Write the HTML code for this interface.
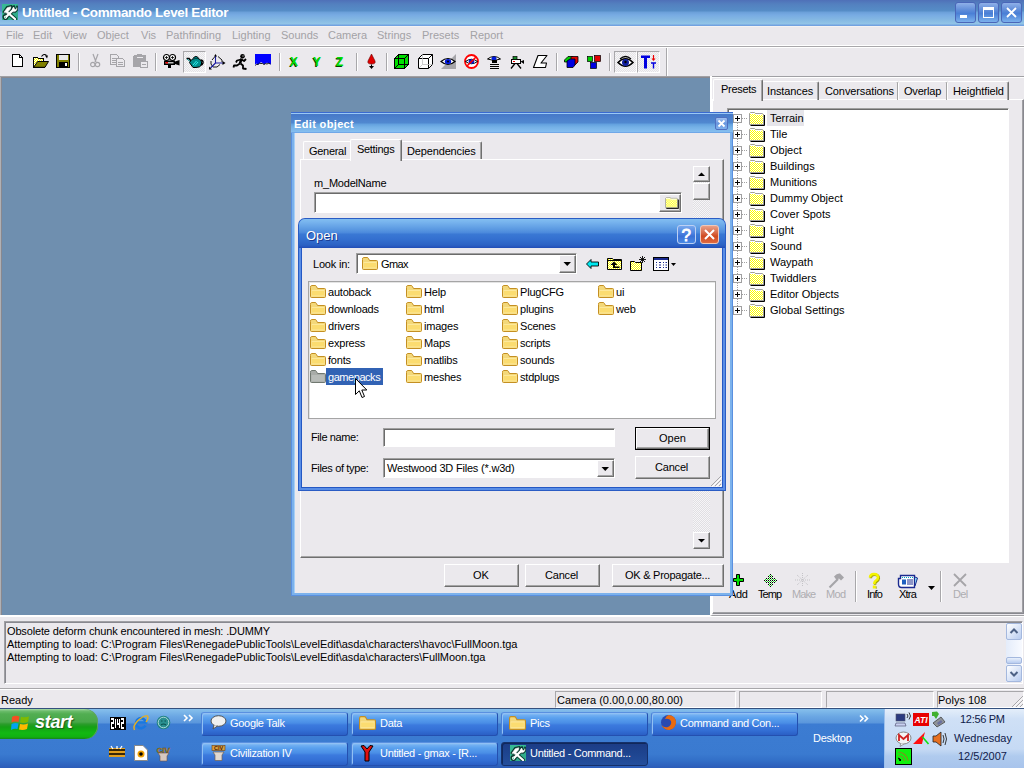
<!DOCTYPE html>
<html><head><meta charset="utf-8">
<style>
*{margin:0;padding:0;box-sizing:border-box}
html,body{width:1024px;height:768px;overflow:hidden;background:#ebe9ed;font-family:"Liberation Sans",sans-serif;font-size:11px;color:#000}
body{position:relative}
.a{position:absolute}
.t{position:absolute;white-space:nowrap;line-height:11px;font-size:11px}
svg{position:absolute;overflow:visible}
#title{left:0;top:0;width:1024px;height:26px;background:linear-gradient(to bottom,#4f70b8 0px,#5380bf 4px,#568dc7 11px,#6a9fd9 12px,#78abe3 15px,#85b9e3 20px,#93c5e7 24px,#72a2e0 25px,#72a2e0 26px)}
.tbtn{position:absolute;top:2px;width:21px;height:21px;border:1px solid #4a66b8;border-radius:3px;background:linear-gradient(to bottom,#8fb0e8 0,#5c8ad8 40%,#4a7fd6 55%,#7ab0ec 100%)}
#menu{left:0;top:26px;width:1024px;height:20px;background:#ebe9ed;border-top:1px solid #f4f2f2;border-bottom:1px solid #fff}
.mi{color:#a3a2a6;top:30px}
#tb{left:0;top:46px;width:1024px;height:31px;background:#ebe9ed;border-top:1px solid #a8a7aa;border-bottom:1px solid #a0a0a4;box-shadow:inset 0 1px 0 #fff}
#view{left:0;top:77px;width:710px;height:538px;background:#6f8faf;border-left:1px solid #b0b0b4;box-shadow:inset 1px 1px 0 #88888f}
.sep{position:absolute;top:53px;width:2px;height:18px;border-left:1px solid #a8a7aa;border-right:1px solid #fff}
.raised{border:1px solid;border-color:#fff #6f6f6f #6f6f6f #fff;box-shadow:inset -1px -1px 0 #a5a5a5;background:#ebe9ed}
.sunk{border:1px solid;border-color:#a0a0a0 #fff #fff #a0a0a0;box-shadow:inset 1px 1px 0 #6b6b6b;background:#fff}
.sunk1{border:1px solid #a5a5a5;background:#fff}
.xbtn{position:absolute;border-radius:3px}
.tbb{width:147px;height:24px;border-radius:3px;border:1px solid #2450b0;border-top-color:#5a90e0;border-left-color:#4a80d8;background:linear-gradient(to bottom,#9ccaf6 0,#72b0f2 2px,#5aa0ee 5px,#4a8ee6 10px,#3c7ade 12px,#3470d6 17px,#2c62c8 21px,#2858c0 24px);box-shadow:inset 1px 1px 0 #90c0f4}
.tbp{width:147px;height:24px;border-radius:3px;border:1px solid #15306a;background:linear-gradient(to bottom,#1c3c86 0,#1e4590 50%,#244e9c 100%);box-shadow:inset 1px 1px 0 #10285a}
.tbt{color:#fff;top:718px;letter-spacing:-0.3px}
</style></head><body>
<svg width="0" height="0" style="position:absolute">
<defs>
<symbol id="fold" viewBox="0 0 16 13">
<path d="M0.5 2.5 L0.5 11.5 Q0.5 12.5 1.5 12.5 L14.5 12.5 Q15.5 12.5 15.5 11.5 L15.5 4.5 Q15.5 3.5 14.5 3.5 L7.5 3.5 L6.5 1.5 Q6 0.5 5 0.5 L1.5 0.5 Q0.5 0.5 0.5 2.5 Z" fill="#f3d87a" stroke="#c48f22"/>
<path d="M1.5 5 L14.5 5 L14.5 11.5 L1.5 11.5 Z" fill="#fde89a"/>
<path d="M2 6 L14 6 L14 10.5 L2 10.5Z" fill="#fbdc70"/>
</symbol>
<symbol id="cfold" viewBox="0 0 16 14">
<path d="M0.5 1.5 L5.5 1.5 L7 3.5 L14.5 3.5 L14.5 12.5 L0.5 12.5 Z" fill="#ffff80" stroke="#000"/>
<path d="M1 4.5 L14 4.5" stroke="#000"/>
<path d="M1 13.5 L15.5 13.5 L15.5 4.5" stroke="#000" fill="none"/>
</symbol>
<pattern id="dith" width="2" height="2" patternUnits="userSpaceOnUse"><rect width="2" height="2" fill="#ffff00"/><rect width="1" height="1" fill="#fff"/><rect x="1" y="1" width="1" height="1" fill="#fff"/></pattern>
<symbol id="tfold" viewBox="0 0 16 14">
<path d="M1 13 H15 V3 L14 2 H7 L6 1 H2 L1 2 Z" fill="#000"/>
<path d="M0.5 12.5 V1.5 L1.5 0.5 H5.5 L6.5 1.5 H13.5 L14.5 2.5 V12.5 Z" fill="url(#dith)" stroke="#a0a0a0"/>
<path d="M1 1.5 H5.5 L6.5 2.5 H13.5" stroke="#fff" fill="none"/>
<path d="M1.5 13.5 H15.5 V3" stroke="#000" fill="none"/>
</symbol>
<symbol id="gfold" viewBox="0 0 16 13">
<path d="M0.5 2.5 L0.5 11.5 Q0.5 12.5 1.5 12.5 L14.5 12.5 Q15.5 12.5 15.5 11.5 L15.5 4.5 Q15.5 3.5 14.5 3.5 L7.5 3.5 L6.5 1.5 Q6 0.5 5 0.5 L1.5 0.5 Q0.5 0.5 0.5 2.5 Z" fill="#a8aca8" stroke="#707870"/>
<path d="M1.5 5 L14.5 5 L14.5 11.5 L1.5 11.5 Z" fill="#b8bcb8"/>
</symbol>
<symbol id="tools" viewBox="0 0 16 16">
<rect width="16" height="16" fill="#36b994"/>
<path d="M0 16 L16 0 V16Z" fill="#2aa080" opacity="0.5"/>
<g stroke="#0b3b30" stroke-linecap="round" stroke-linejoin="round" fill="#0b3b30">
<path d="M5.5 8.5 L13 15" stroke-width="4"/>
<path d="M3.5 13.5 L11.5 5.5" stroke-width="4"/>
<path d="M1.5 8 L5 3 L9.5 2 L9 5 L5 9.5Z" stroke-width="2"/>
<path d="M10 7.5 Q9 3 12 2 L13 4.5 L15 5 L15 2.5 Q16.5 6 13 8Z" stroke-width="1.8"/>
<circle cx="3.5" cy="13" r="2.3" stroke-width="1.5"/>
</g>
<g stroke="#fff" stroke-linecap="round" stroke-linejoin="round" fill="#fff">
<path d="M5.5 8.5 L13 15" stroke-width="2.3"/>
<path d="M3.5 13.5 L11.5 5.5" stroke-width="2.3"/>
<path d="M2.2 8 L5.3 3.7 L8.8 2.8 L8.4 5 L5 8.8Z" stroke-width="0.6"/>
<path d="M10.5 7.3 Q10 3.8 11.7 3 L12.5 5.2 L14.7 5.8 L14.8 3.7 Q15.5 6.3 12.8 7.6Z" stroke-width="0.5"/>
<circle cx="3.5" cy="13" r="1.6" stroke-width="0"/>
</g>
<circle cx="3.2" cy="13.3" r="0.7" fill="#36b994"/>
</symbol>
<pattern id="chk" width="2" height="2" patternUnits="userSpaceOnUse"><rect width="1" height="1" fill="#000"/><rect x="1" y="1" width="1" height="1" fill="#20e020"/></pattern>
</defs>
</svg>
<!-- TITLE -->
<div id="title" class="a"></div>
<svg style="left:2px;top:4px" width="16" height="16"><use href="#tools"/></svg>
<div class="t" style="left:22px;top:6px;font-size:13.4px;line-height:13.4px;font-weight:bold;color:#fff;letter-spacing:-0.3px">Untitled - Commando Level Editor</div>
<div class="tbtn" style="left:955px"></div>
<div class="a" style="left:960px;top:15px;width:7px;height:3px;background:#fff"></div>
<div class="tbtn" style="left:978px"></div>
<div class="a" style="left:983px;top:7px;width:11px;height:11px;border:1px solid #fff;border-top-width:3px"></div>
<div class="tbtn" style="left:1001px"></div>
<svg style="left:1001px;top:2px" width="21" height="21" viewBox="0 0 21 21"><path d="M6 6 L15 15 M15 6 L6 15" stroke="#fff" stroke-width="1.8"/></svg>
<!-- MENU -->
<div id="menu" class="a"></div>
<div class="t mi" style="left:6px">File</div>
<div class="t mi" style="left:33px">Edit</div>
<div class="t mi" style="left:63px">View</div>
<div class="t mi" style="left:97px">Object</div>
<div class="t mi" style="left:141px">Vis</div>
<div class="t mi" style="left:166px">Pathfinding</div>
<div class="t mi" style="left:232px">Lighting</div>
<div class="t mi" style="left:281px">Sounds</div>
<div class="t mi" style="left:328px">Camera</div>
<div class="t mi" style="left:377px">Strings</div>
<div class="t mi" style="left:422px">Presets</div>
<div class="t mi" style="left:470px">Report</div>
<!-- TOOLBAR -->
<div id="tb" class="a"></div>
<!-- VIEWPORT / LOG / STATUS -->
<div id="view" class="a"></div>
<div class="a" style="left:0;top:615px;width:1024px;height:2px;background:#fff"></div>
<div class="a" style="left:4px;top:621px;width:1019px;height:63px;border:1px solid;border-color:#a0a0a4 #fff #fff #a0a0a4;box-shadow:inset 1px 1px 0 #88888f;background:#ebe9ed"></div>
<div class="t" style="left:7px;top:626px;letter-spacing:-0.15px">Obsolete deform chunk encountered in mesh: .DUMMY</div>
<div class="t" style="left:7px;top:639px;letter-spacing:-0.05px">Attempting to load: C:\Program Files\RenegadePublicTools\LevelEdit\asda\characters\havoc\FullMoon.tga</div>
<div class="t" style="left:7px;top:652px;letter-spacing:-0.05px">Attempting to load: C:\Program Files\RenegadePublicTools\LevelEdit\asda\characters\FullMoon.tga</div>
<!-- log scrollbar -->
<div class="a" style="left:1006px;top:623px;width:16px;height:59px;background:linear-gradient(to right,#e4ecfa,#f8faff)"></div>
<div class="a" style="left:1006px;top:623px;width:16px;height:17px;border:1px solid #a4b8de;border-radius:2px;background:linear-gradient(135deg,#ffffff 0,#dce6f8 50%,#b8ccf0 100%)"></div>
<svg style="left:1006px;top:623px" width="16" height="17"><path d="M4.5 10 L8 6.5 L11.5 10" stroke="#4d6185" stroke-width="2" fill="none"/></svg>
<div class="a" style="left:1006px;top:657px;width:16px;height:7px;border:1px solid #a4b8de;border-radius:2px;background:linear-gradient(to bottom,#e8f0fc,#b8ccf0)"></div>
<div class="a" style="left:1006px;top:665px;width:16px;height:17px;border:1px solid #a4b8de;border-radius:2px;background:linear-gradient(135deg,#ffffff 0,#dce6f8 50%,#b8ccf0 100%)"></div>
<svg style="left:1006px;top:665px" width="16" height="17"><path d="M4.5 7 L8 10.5 L11.5 7" stroke="#4d6185" stroke-width="2" fill="none"/></svg>
<div class="a" style="left:0;top:688px;width:1024px;height:1px;background:#a8a7aa"></div>
<div class="a" style="left:0;top:689px;width:1024px;height:1px;background:#fff"></div>
<div class="t" style="left:1px;top:695px">Ready</div>
<div class="a" style="left:555px;top:691px;width:181px;height:17px;border:1px solid;border-color:#a8a7aa #fff #fff #a8a7aa"></div>
<div class="t" style="left:557px;top:695px">Camera (0.00,0.00,80.00)</div>
<div class="a" style="left:739px;top:691px;width:83px;height:17px;border:1px solid;border-color:#a8a7aa #fff #fff #a8a7aa"></div>
<div class="a" style="left:826px;top:691px;width:108px;height:17px;border:1px solid;border-color:#a8a7aa #fff #fff #a8a7aa"></div>
<div class="a" style="left:937px;top:691px;width:87px;height:17px;border:1px solid;border-color:#a8a7aa #fff #fff #a8a7aa"></div>
<div class="t" style="left:938px;top:695px">Polys 108</div>
<svg style="left:1010px;top:694px" width="14" height="14"><path d="M13 2 L2 13 M13 6 L6 13 M13 10 L10 13" stroke="#a8a7aa" stroke-width="1"/><path d="M13.5 3 L3 13.5 M13.5 7 L7 13.5 M13.5 11 L11 13.5" stroke="#fff" stroke-width="1"/></svg>
<!-- toolbar icons -->
<svg style="left:12px;top:54px" width="12" height="14" viewBox="0 0 12 14" shape-rendering="crispEdges">
<path d="M0.5 0.5 H7.5 L10.5 3.5 V12.5 H0.5 Z" fill="#fff" stroke="#000"/><path d="M7.5 0.5 V3.5 H10.5" fill="none" stroke="#000"/></svg>
<svg style="left:33px;top:53px" width="16" height="15" viewBox="0 0 16 15">
<path d="M8.5 3.5 Q11 0 13.5 2.5" stroke="#000" stroke-width="1.1" fill="none"/><path d="M12 2.5 L15 2.5 L14 5.5Z" fill="#000"/>
<path d="M0.5 4.5 H4.5 L5.5 5.5 H10.5 V8.5 H0.5Z" fill="url(#dith)" stroke="#000" stroke-width="1" shape-rendering="crispEdges"/>
<path d="M0.5 5 V14.5 H12" fill="url(#dith)" stroke="#000" stroke-width="1" shape-rendering="crispEdges"/>
<rect x="1" y="8" width="4" height="6" fill="url(#dith)"/>
<path d="M0.8 14.3 L4.5 8.5 H15.5 L12 14.3 Z" fill="#808000" stroke="#000" stroke-width="1"/>
</svg>
<svg style="left:56px;top:54px" width="15" height="14" viewBox="0 0 15 14" shape-rendering="crispEdges">
<rect x="0.5" y="0.5" width="13" height="13" fill="#808000" stroke="#000"/><rect x="3" y="1" width="9" height="5" fill="#e8e8e8"/><rect x="3" y="8" width="9" height="5" fill="#000"/><rect x="9" y="9" width="2" height="3" fill="#fff"/></svg>
<div class="sep" style="left:78px"></div>
<svg style="left:90px;top:54px" width="11" height="14" viewBox="0 0 11 14">
<path d="M3 0 L6 8 M8 0 L5 8" stroke="#a6a5a9" stroke-width="1.2" fill="none"/><circle cx="2.8" cy="10.5" r="2.2" fill="none" stroke="#a6a5a9" stroke-width="1.2"/><circle cx="7.5" cy="10.5" r="2.2" fill="none" stroke="#a6a5a9" stroke-width="1.2"/></svg>
<svg style="left:110px;top:54px" width="16" height="14" viewBox="0 0 16 14" shape-rendering="crispEdges">
<path d="M0.5 0.5 H6.5 L8.5 2.5 V10.5 H0.5Z" fill="#ebe9ed" stroke="#a6a5a9"/><path d="M2 4.5H6 M2 6.5H6 M2 8.5H6" stroke="#a6a5a9"/>
<path d="M6.5 4.5 H12.5 L14.5 6.5 V12.5 H6.5Z" fill="#ebe9ed" stroke="#a6a5a9"/><path d="M8 8.5H13 M8 10.5H13" stroke="#a6a5a9"/></svg>
<svg style="left:133px;top:54px" width="16" height="14" viewBox="0 0 16 14" shape-rendering="crispEdges">
<rect x="0" y="1" width="13" height="12" rx="2" fill="#a6a5a9"/><rect x="4" y="0" width="5" height="2" fill="#a6a5a9"/><rect x="4" y="2.5" width="6" height="1" fill="#ebe9ed"/>
<path d="M7.5 7.5 H14.5 V13.5 H7.5Z" fill="#ebe9ed" stroke="#a6a5a9"/><path d="M9 10.5H13" stroke="#a6a5a9"/></svg>
<div class="sep" style="left:155px"></div>
<svg style="left:163px;top:54px" width="17" height="14" viewBox="0 0 17 14">
<circle cx="3.5" cy="3.5" r="3" fill="#fff" stroke="#000" stroke-width="1.2"/><circle cx="9.5" cy="3.5" r="3" fill="#fff" stroke="#000" stroke-width="1.2"/><path d="M2 3.5H5 M3.5 2V5 M8 3.5H11 M9.5 2V5" stroke="#000" stroke-width="0.8"/>
<rect x="1" y="6.5" width="11" height="4.5" fill="#000"/><rect x="2.5" y="8" width="8" height="1.5" fill="#c0c0c0"/><rect x="2.5" y="8" width="2.5" height="1.5" fill="#e00"/><path d="M12 7.5 L16.5 6 V11.5 L12 10Z" fill="#000"/><rect x="5" y="11" width="3" height="3" fill="#000"/></svg>
<div class="a" style="left:183px;top:51px;width:23px;height:22px;border:1px solid;border-color:#a8a7aa #fff #fff #a8a7aa;background:repeating-conic-gradient(#f6f5f7 0 25%,#e4e3e6 0 50%) 0 0/2px 2px"></div>
<svg style="left:186px;top:56px" width="18" height="12" viewBox="0 0 18 12">
<path d="M0.5 2.5 L3 2.5 L6 6" stroke="#000" stroke-width="1.6" fill="none"/>
<path d="M1 3 L6 7" stroke="#008c8c" stroke-width="1" fill="none"/>
<path d="M5 4.5 Q6 2.5 9 2.5 L12 2.5 Q15 3 15.5 6 L15.5 9 Q14 11.5 10 11.5 L7 11.5 Q5 9 3.5 6.5Z" fill="#008c8c" stroke="#000" stroke-width="1"/>
<path d="M7 2.5 Q8 0.5 10 0.5 Q12 0.5 12.5 2.5" fill="#008c8c" stroke="#000" stroke-width="1"/>
<path d="M15 4 Q17.5 4.5 17 7 Q16.5 9 14.5 9" fill="none" stroke="#000" stroke-width="1.4"/>
<path d="M7 9 L10.5 5 M9 9.5 L12 6" stroke="#30f0f0" stroke-width="1"/>
</svg>
<svg style="left:209px;top:54px" width="17" height="16" viewBox="0 0 17 16">
<path d="M3 6 L6 2.5 M9 2.5 L13 6 L13 8 M11 10.5 L8 13 L4 13 L2 10 L2 7" stroke="#000" stroke-width="0.9" fill="none"/>
<path d="M6.5 9 V2 M6.5 9 H14 M6.5 9 L1.5 14" stroke="#1a1aa0" stroke-width="1.1" fill="none"/>
<path d="M5 2.5 L6.5 0 L8 2.5Z M13.5 7 L16.5 9 L13.5 11Z M0 12.5 L0 15.5 L3 15.5Z" fill="#000"/>
</svg>
<svg style="left:233px;top:54px" width="14" height="16" viewBox="0 0 14 16">
<circle cx="9.5" cy="2.3" r="2.3" fill="#000"/><rect x="9.5" y="1.5" width="1" height="1" fill="#fff"/>
<path d="M8.5 4.5 L7 9.5" stroke="#000" stroke-width="2.6" fill="none"/>
<path d="M8.5 5.5 L11 7 L13 5" stroke="#000" stroke-width="1.8" fill="none" stroke-linejoin="round"/>
<path d="M8 5.5 L4 6.5 L3 8.5" stroke="#000" stroke-width="1.8" fill="none" stroke-linejoin="round"/>
<path d="M7 9.5 L4 11.5 L1 11.5 L0.5 13.5" stroke="#000" stroke-width="1.8" fill="none" stroke-linejoin="round"/>
<path d="M7.5 9.5 L10 11.5 L10 14.5 L13.5 15" stroke="#000" stroke-width="1.8" fill="none" stroke-linejoin="round"/>
</svg>
<svg style="left:255px;top:54px" width="17" height="13" viewBox="0 0 17 13">
<path d="M0 0 H16 V11 Q15 8.5 13.5 9.5 Q12 8 10.5 9.5 Q9 11 7.5 9 Q6 7.5 4.5 9.5 Q3 11.5 1.5 9.5 Q0.5 9 0 12Z" fill="#0000ff"/>
<path d="M0.5 11.5 Q1.5 9.5 3 10.5 Q4.5 8.5 6 9.5 Q7.5 9 9 10.5 Q10.5 9 12 10 Q13.5 8.5 15.5 10" stroke="#000" stroke-width="0.9" fill="none"/>
</svg>
<div class="sep" style="left:279px"></div>
<div class="t" style="left:290px;top:56px;font-size:12px;line-height:12px;font-weight:bold;color:#00e000;text-shadow:-1px 1px 0 #004000">X</div>
<div class="t" style="left:313px;top:56px;font-size:12px;line-height:12px;font-weight:bold;color:#00e000;text-shadow:-1px 1px 0 #004000">Y</div>
<div class="t" style="left:336px;top:56px;font-size:12px;line-height:12px;font-weight:bold;color:#00e000;text-shadow:-1px 1px 0 #004000">Z</div>
<div class="sep" style="left:356px"></div>
<svg style="left:367px;top:54px" width="10" height="16" viewBox="0 0 10 16">
<path d="M4.5 0 L1 7 Q0 10 4.5 10 Q9 10 8 7Z" fill="#e00000" stroke="#600" stroke-width="0.6"/><path d="M4.5 10.5 V12" stroke="#000"/><path d="M2 12 H7 L4.5 15Z" fill="#000"/></svg>
<div class="sep" style="left:386px"></div>
<svg style="left:394px;top:54px" width="16" height="15" viewBox="0 0 16 15" shape-rendering="crispEdges">
<path d="M0.5 4.5 L4.5 0.5 H14.5 V10.5 L10.5 14.5 H0.5Z" fill="#00e000" stroke="#000"/>
<path d="M0.5 4.5 H10.5 V14.5 M10.5 4.5 L14.5 0.5 M4.5 0.5 V10.5 H14.5 M4.5 10.5 L0.5 14.5" stroke="#000" fill="none"/>
<rect x="5" y="5" width="5" height="5" fill="#00e000"/>
</svg>
<svg style="left:418px;top:54px" width="16" height="15" viewBox="0 0 16 15">
<path d="M0.5 4.5 L4.5 0.5 H14.5 V10.5 L10.5 14.5 H0.5Z" fill="#fff" stroke="#000"/><path d="M0.5 4.5 H10.5 V14.5 M10.5 4.5 L14.5 0.5" stroke="#000" fill="none"/><path d="M4.5 0.5 V10.5 H14.5 M4.5 10.5 L0.5 14.5" stroke="#c0c0c0" fill="none" stroke-width="0.8"/></svg>
<svg style="left:440px;top:54px" width="16" height="15" viewBox="0 0 16 15">
<path d="M16 0 V15 H1Z" fill="#a6a5a9"/><path d="M1 7.5 Q8 1.5 15 7.5 Q8 13.5 1 7.5Z" fill="#fff" stroke="#000" stroke-width="1.2"/><ellipse cx="8" cy="7.5" rx="3.2" ry="2.6" fill="#0018d8"/><circle cx="8" cy="7.5" r="1" fill="#000"/></svg>
<svg style="left:463px;top:54px" width="17" height="15" viewBox="0 0 17 15">
<circle cx="8.5" cy="7.5" r="6.5" fill="#fff" stroke="#ff0000" stroke-width="1.8"/><path d="M2.5 7.5 Q8.5 3 14.5 7.5 Q8.5 12 2.5 7.5Z" fill="#fff" stroke="#000" stroke-width="1"/><ellipse cx="8.5" cy="7.5" rx="2.8" ry="2.2" fill="#0018d8"/><path d="M4 12 L13 3" stroke="#ff0000" stroke-width="1.6"/></svg>
<svg style="left:487px;top:55px" width="15" height="14" viewBox="0 0 15 14">
<path d="M0.5 4 Q7 -1 13.5 4 Q7 7 0.5 4Z" fill="#fff" stroke="#000"/><ellipse cx="7" cy="3.5" rx="2.5" ry="2" fill="#0018d8"/><rect x="5" y="5" width="5" height="3" fill="#000"/><path d="M3 9.5H12 M3 11.5H12 M3 13.5H12" stroke="#000" stroke-width="1.2"/></svg>
<svg style="left:510px;top:56px" width="15" height="13" viewBox="0 0 15 13">
<rect x="1.5" y="3.5" width="9" height="4" fill="#fff" stroke="#000"/><rect x="3" y="5" width="2" height="1" fill="#e00"/><rect x="3" y="0.5" width="4" height="3" fill="#1a8a2a" stroke="#000" stroke-width="0.7"/><path d="M10.5 5.5 L14 4 V8 Z" fill="#000"/><path d="M5 7.5 L1 12.5 M7 7.5 L11 12.5" stroke="#000" stroke-width="1.3"/></svg>
<svg style="left:533px;top:55px" width="15" height="13" viewBox="0 0 15 13">
<path d="M5 0.5 H14 L8 8 H13.5 L12.5 12.5 H0.5 Z" fill="#fff" stroke="#000" stroke-width="1.1" stroke-linejoin="round"/></svg>
<div class="sep" style="left:556px"></div>
<svg style="left:564px;top:56px" width="15" height="12" viewBox="0 0 15 12">
<path d="M0.5 4 L4 0.5 H9 V6 H0.5Z" fill="#00d000" stroke="#000" stroke-width="0.8"/><path d="M7 0.5 H14 V6 L11 9 H7Z" fill="#e00000" stroke="#000" stroke-width="0.8"/><path d="M3 5 L6 3 H11 V9 L9 11.5 H3Z" fill="#0000e0" stroke="#000" stroke-width="0.8"/></svg>
<svg style="left:587px;top:55px" width="14" height="14" viewBox="0 0 14 14">
<rect x="0.5" y="1.5" width="5" height="5" fill="#00d000" stroke="#000" stroke-width="0.7"/><rect x="7.5" y="0.5" width="6" height="6" fill="#e00000" stroke="#000" stroke-width="0.7"/><rect x="3.5" y="7.5" width="6" height="6" fill="#0000e0" stroke="#000" stroke-width="0.7"/></svg>
<div class="sep" style="left:609px"></div>
<div class="a" style="left:614px;top:51px;width:23px;height:22px;border:1px solid;border-color:#a8a7aa #fff #fff #a8a7aa;background:repeating-conic-gradient(#f6f5f7 0 25%,#e4e3e6 0 50%) 0 0/2px 2px"></div>
<svg style="left:617px;top:55px" width="17" height="15" viewBox="0 0 17 15">
<path d="M1 7.5 Q8.5 0 16 7.5 Q8.5 15 1 7.5Z" fill="#fff" stroke="#000" stroke-width="1.6"/><path d="M3 4 Q8.5 -1 14 4" stroke="#000" fill="none" stroke-width="1.2"/><circle cx="8.5" cy="7.5" r="3.5" fill="#1020a0"/><circle cx="8.5" cy="7" r="1.2" fill="#000"/></svg>
<div class="a" style="left:637px;top:51px;width:23px;height:22px;border:1px solid;border-color:#a8a7aa #fff #fff #a8a7aa;background:repeating-conic-gradient(#f6f5f7 0 25%,#e4e3e6 0 50%) 0 0/2px 2px"></div>
<svg style="left:641px;top:55px" width="16" height="14" viewBox="0 0 16 14">
<path d="M0 0.5 H9 V3 H6 V13.5 H3 V3 H0Z" fill="#0000e0"/><path d="M12.5 0 V5" stroke="#e00" stroke-width="1.2"/><path d="M10.5 3.5 H14.5 L12.5 6Z" fill="#e00"/><path d="M10 8 H15 M12.5 8 V13.5" stroke="#0000e0" stroke-width="1.4"/></svg>
<div class="a" style="left:666px;top:48px;width:2px;height:28px;border-left:1px solid #a8a7aa;border-right:1px solid #fff"></div>
<!-- RIGHT PANEL -->
<div class="a" style="left:710px;top:77px;width:314px;height:539px;background:#ebe9ed;border-left:2px solid #fff;border-top:1px solid #fff;border-bottom:1px solid #a0a0a4"></div>
<div class="a" style="left:710px;top:76px;width:2px;height:1px;background:#fff"></div>
<div class="a" style="left:712px;top:99px;width:312px;height:515px;border:1px solid;border-color:#fff #88888f #88888f #fff;box-shadow:inset -1px -1px 0 #a0a0a4"></div>
<div class="a" style="left:818px;top:81px;width:81px;height:19px;border:1px solid;border-bottom:0;border-color:#fff #6f6f6f #6f6f6f #fff;border-radius:2px 2px 0 0;box-shadow:inset -1px 0 0 #a5a5a5"></div>
<div class="a" style="left:762px;top:81px;width:57px;height:19px;border:1px solid;border-bottom:0;border-color:#fff #6f6f6f #6f6f6f #fff;border-radius:2px 2px 0 0;box-shadow:inset -1px 0 0 #a5a5a5"></div>
<div class="a" style="left:898px;top:81px;width:50px;height:19px;border:1px solid;border-bottom:0;border-color:#fff #6f6f6f #6f6f6f #fff;border-radius:2px 2px 0 0;box-shadow:inset -1px 0 0 #a5a5a5"></div>
<div class="a" style="left:947px;top:81px;width:62px;height:19px;border:1px solid;border-bottom:0;border-color:#fff #6f6f6f #6f6f6f #fff;border-radius:2px 2px 0 0;box-shadow:inset -1px 0 0 #a5a5a5"></div>
<div class="a" style="left:713px;top:79px;width:50px;height:22px;background:#ebe9ed;border:1px solid;border-bottom:0;border-color:#fff #6f6f6f #6f6f6f #fff;border-radius:2px 2px 0 0;box-shadow:inset -1px 0 0 #a5a5a5"></div>
<div class="t" style="left:721px;top:84px;letter-spacing:-0.3px">Presets</div>
<div class="t" style="left:767px;top:86px;letter-spacing:-0.1px">Instances</div>
<div class="t" style="left:825px;top:86px;letter-spacing:-0.1px">Conversations</div>
<div class="t" style="left:904px;top:86px;letter-spacing:-0.2px">Overlap</div>
<div class="t" style="left:953px;top:86px;letter-spacing:-0.1px">Heightfield</div>
<div class="a" style="left:727px;top:108px;width:282px;height:455px;background:#fff;border:1px solid;border-color:#a0a0a0 #fff #fff #a0a0a0;box-shadow:inset 1px 1px 0 #6b6b6b"></div>
<div class="a" style="left:767px;top:110px;width:37px;height:16px;background:#e6e5ea"></div>

<div class="a" style="left:733px;top:114px;width:9px;height:9px;border:1px solid #a0a0a0;background:#fff"></div>
<div class="a" style="left:735px;top:118px;width:5px;height:1px;background:#000"></div><div class="a" style="left:737px;top:116px;width:1px;height:5px;background:#000"></div>
<div class="a" style="left:742px;top:118px;width:6px;height:1px;background:repeating-linear-gradient(to right,#a0a0a0 0 1px,transparent 1px 2px)"></div>
<div class="a" style="left:737px;top:123px;width:1px;height:7px;background:repeating-linear-gradient(to bottom,#a0a0a0 0 1px,transparent 1px 2px)"></div>
<svg style="left:749px;top:112px" width="16" height="14"><use href="#tfold"/></svg>
<div class="t" style="left:770px;top:113px">Terrain</div>
<div class="a" style="left:733px;top:130px;width:9px;height:9px;border:1px solid #a0a0a0;background:#fff"></div>
<div class="a" style="left:735px;top:134px;width:5px;height:1px;background:#000"></div><div class="a" style="left:737px;top:132px;width:1px;height:5px;background:#000"></div>
<div class="a" style="left:742px;top:134px;width:6px;height:1px;background:repeating-linear-gradient(to right,#a0a0a0 0 1px,transparent 1px 2px)"></div>
<div class="a" style="left:737px;top:139px;width:1px;height:7px;background:repeating-linear-gradient(to bottom,#a0a0a0 0 1px,transparent 1px 2px)"></div>
<svg style="left:749px;top:128px" width="16" height="14"><use href="#tfold"/></svg>
<div class="t" style="left:770px;top:129px">Tile</div>
<div class="a" style="left:733px;top:146px;width:9px;height:9px;border:1px solid #a0a0a0;background:#fff"></div>
<div class="a" style="left:735px;top:150px;width:5px;height:1px;background:#000"></div><div class="a" style="left:737px;top:148px;width:1px;height:5px;background:#000"></div>
<div class="a" style="left:742px;top:150px;width:6px;height:1px;background:repeating-linear-gradient(to right,#a0a0a0 0 1px,transparent 1px 2px)"></div>
<div class="a" style="left:737px;top:155px;width:1px;height:7px;background:repeating-linear-gradient(to bottom,#a0a0a0 0 1px,transparent 1px 2px)"></div>
<svg style="left:749px;top:144px" width="16" height="14"><use href="#tfold"/></svg>
<div class="t" style="left:770px;top:145px">Object</div>
<div class="a" style="left:733px;top:162px;width:9px;height:9px;border:1px solid #a0a0a0;background:#fff"></div>
<div class="a" style="left:735px;top:166px;width:5px;height:1px;background:#000"></div><div class="a" style="left:737px;top:164px;width:1px;height:5px;background:#000"></div>
<div class="a" style="left:742px;top:166px;width:6px;height:1px;background:repeating-linear-gradient(to right,#a0a0a0 0 1px,transparent 1px 2px)"></div>
<div class="a" style="left:737px;top:171px;width:1px;height:7px;background:repeating-linear-gradient(to bottom,#a0a0a0 0 1px,transparent 1px 2px)"></div>
<svg style="left:749px;top:160px" width="16" height="14"><use href="#tfold"/></svg>
<div class="t" style="left:770px;top:161px">Buildings</div>
<div class="a" style="left:733px;top:178px;width:9px;height:9px;border:1px solid #a0a0a0;background:#fff"></div>
<div class="a" style="left:735px;top:182px;width:5px;height:1px;background:#000"></div><div class="a" style="left:737px;top:180px;width:1px;height:5px;background:#000"></div>
<div class="a" style="left:742px;top:182px;width:6px;height:1px;background:repeating-linear-gradient(to right,#a0a0a0 0 1px,transparent 1px 2px)"></div>
<div class="a" style="left:737px;top:187px;width:1px;height:7px;background:repeating-linear-gradient(to bottom,#a0a0a0 0 1px,transparent 1px 2px)"></div>
<svg style="left:749px;top:176px" width="16" height="14"><use href="#tfold"/></svg>
<div class="t" style="left:770px;top:177px">Munitions</div>
<div class="a" style="left:733px;top:194px;width:9px;height:9px;border:1px solid #a0a0a0;background:#fff"></div>
<div class="a" style="left:735px;top:198px;width:5px;height:1px;background:#000"></div><div class="a" style="left:737px;top:196px;width:1px;height:5px;background:#000"></div>
<div class="a" style="left:742px;top:198px;width:6px;height:1px;background:repeating-linear-gradient(to right,#a0a0a0 0 1px,transparent 1px 2px)"></div>
<div class="a" style="left:737px;top:203px;width:1px;height:7px;background:repeating-linear-gradient(to bottom,#a0a0a0 0 1px,transparent 1px 2px)"></div>
<svg style="left:749px;top:192px" width="16" height="14"><use href="#tfold"/></svg>
<div class="t" style="left:770px;top:193px">Dummy Object</div>
<div class="a" style="left:733px;top:210px;width:9px;height:9px;border:1px solid #a0a0a0;background:#fff"></div>
<div class="a" style="left:735px;top:214px;width:5px;height:1px;background:#000"></div><div class="a" style="left:737px;top:212px;width:1px;height:5px;background:#000"></div>
<div class="a" style="left:742px;top:214px;width:6px;height:1px;background:repeating-linear-gradient(to right,#a0a0a0 0 1px,transparent 1px 2px)"></div>
<div class="a" style="left:737px;top:219px;width:1px;height:7px;background:repeating-linear-gradient(to bottom,#a0a0a0 0 1px,transparent 1px 2px)"></div>
<svg style="left:749px;top:208px" width="16" height="14"><use href="#tfold"/></svg>
<div class="t" style="left:770px;top:209px">Cover Spots</div>
<div class="a" style="left:733px;top:226px;width:9px;height:9px;border:1px solid #a0a0a0;background:#fff"></div>
<div class="a" style="left:735px;top:230px;width:5px;height:1px;background:#000"></div><div class="a" style="left:737px;top:228px;width:1px;height:5px;background:#000"></div>
<div class="a" style="left:742px;top:230px;width:6px;height:1px;background:repeating-linear-gradient(to right,#a0a0a0 0 1px,transparent 1px 2px)"></div>
<div class="a" style="left:737px;top:235px;width:1px;height:7px;background:repeating-linear-gradient(to bottom,#a0a0a0 0 1px,transparent 1px 2px)"></div>
<svg style="left:749px;top:224px" width="16" height="14"><use href="#tfold"/></svg>
<div class="t" style="left:770px;top:225px">Light</div>
<div class="a" style="left:733px;top:242px;width:9px;height:9px;border:1px solid #a0a0a0;background:#fff"></div>
<div class="a" style="left:735px;top:246px;width:5px;height:1px;background:#000"></div><div class="a" style="left:737px;top:244px;width:1px;height:5px;background:#000"></div>
<div class="a" style="left:742px;top:246px;width:6px;height:1px;background:repeating-linear-gradient(to right,#a0a0a0 0 1px,transparent 1px 2px)"></div>
<div class="a" style="left:737px;top:251px;width:1px;height:7px;background:repeating-linear-gradient(to bottom,#a0a0a0 0 1px,transparent 1px 2px)"></div>
<svg style="left:749px;top:240px" width="16" height="14"><use href="#tfold"/></svg>
<div class="t" style="left:770px;top:241px">Sound</div>
<div class="a" style="left:733px;top:258px;width:9px;height:9px;border:1px solid #a0a0a0;background:#fff"></div>
<div class="a" style="left:735px;top:262px;width:5px;height:1px;background:#000"></div><div class="a" style="left:737px;top:260px;width:1px;height:5px;background:#000"></div>
<div class="a" style="left:742px;top:262px;width:6px;height:1px;background:repeating-linear-gradient(to right,#a0a0a0 0 1px,transparent 1px 2px)"></div>
<div class="a" style="left:737px;top:267px;width:1px;height:7px;background:repeating-linear-gradient(to bottom,#a0a0a0 0 1px,transparent 1px 2px)"></div>
<svg style="left:749px;top:256px" width="16" height="14"><use href="#tfold"/></svg>
<div class="t" style="left:770px;top:257px">Waypath</div>
<div class="a" style="left:733px;top:274px;width:9px;height:9px;border:1px solid #a0a0a0;background:#fff"></div>
<div class="a" style="left:735px;top:278px;width:5px;height:1px;background:#000"></div><div class="a" style="left:737px;top:276px;width:1px;height:5px;background:#000"></div>
<div class="a" style="left:742px;top:278px;width:6px;height:1px;background:repeating-linear-gradient(to right,#a0a0a0 0 1px,transparent 1px 2px)"></div>
<div class="a" style="left:737px;top:283px;width:1px;height:7px;background:repeating-linear-gradient(to bottom,#a0a0a0 0 1px,transparent 1px 2px)"></div>
<svg style="left:749px;top:272px" width="16" height="14"><use href="#tfold"/></svg>
<div class="t" style="left:770px;top:273px">Twiddlers</div>
<div class="a" style="left:733px;top:290px;width:9px;height:9px;border:1px solid #a0a0a0;background:#fff"></div>
<div class="a" style="left:735px;top:294px;width:5px;height:1px;background:#000"></div><div class="a" style="left:737px;top:292px;width:1px;height:5px;background:#000"></div>
<div class="a" style="left:742px;top:294px;width:6px;height:1px;background:repeating-linear-gradient(to right,#a0a0a0 0 1px,transparent 1px 2px)"></div>
<div class="a" style="left:737px;top:299px;width:1px;height:7px;background:repeating-linear-gradient(to bottom,#a0a0a0 0 1px,transparent 1px 2px)"></div>
<svg style="left:749px;top:288px" width="16" height="14"><use href="#tfold"/></svg>
<div class="t" style="left:770px;top:289px">Editor Objects</div>
<div class="a" style="left:733px;top:306px;width:9px;height:9px;border:1px solid #a0a0a0;background:#fff"></div>
<div class="a" style="left:735px;top:310px;width:5px;height:1px;background:#000"></div><div class="a" style="left:737px;top:308px;width:1px;height:5px;background:#000"></div>
<div class="a" style="left:742px;top:310px;width:6px;height:1px;background:repeating-linear-gradient(to right,#a0a0a0 0 1px,transparent 1px 2px)"></div>
<svg style="left:749px;top:304px" width="16" height="14"><use href="#tfold"/></svg>
<div class="t" style="left:770px;top:305px">Global Settings</div>

<svg style="left:733px;top:574px" width="11" height="12" viewBox="0 0 11 12"><path d="M3.5 0.5 H6.5 V4.5 H10.5 V7.5 H6.5 V11.5 H3.5 V7.5 H0.5 V4.5 H3.5Z" fill="#00e000" stroke="#000"/></svg>
<div class="t" style="left:729px;top:589px;letter-spacing:-0.4px">Add</div>
<svg style="left:764px;top:574px" width="13" height="13" viewBox="0 0 13 13" shape-rendering="crispEdges"><path d="M5 0 H8 V2 H9 V4 H11 V5 H13 V8 H11 V9 H9 V11 H8 V13 H5 V11 H4 V9 H2 V8 H0 V5 H2 V4 H4 V2 H5Z" fill="url(#chk)"/><path d="M6.5 2 V11 M2 6.5 H11" stroke="url(#chk)" stroke-width="1"/></svg>
<div class="t" style="left:758px;top:589px;letter-spacing:-0.9px">Temp</div>
<svg style="left:795px;top:573px" width="15" height="14" viewBox="0 0 15 14"><path d="M7.5 0 V14 M0 7 H15 M2 2 L13 12 M13 2 L2 12" stroke="#c4c3c7" stroke-dasharray="1 1"/></svg>
<div class="t" style="left:792px;top:589px;letter-spacing:-0.9px;color:#aeadb1">Make</div>
<svg style="left:828px;top:573px" width="17" height="16" viewBox="0 0 17 16"><path d="M1.5 14.5 L10 6" stroke="#a6a5a9" stroke-width="2.2"/><path d="M6 3.5 Q9 0 12 0.5 L16 4.5 L13 7.5 L11 5.5 L8.5 7 Z" fill="#a6a5a9"/></svg>
<div class="t" style="left:826px;top:589px;letter-spacing:-0.6px;color:#aeadb1">Mod</div>
<div class="a" style="left:855px;top:571px;width:2px;height:31px;border-left:1px solid #a8a7aa;border-right:1px solid #fff"></div>
<svg style="left:868px;top:573px" width="12" height="16" viewBox="0 0 12 16"><path d="M2 4.5 Q2 1 6 1 Q10 1 10 4.5 Q10 6.5 7.5 8 Q6.2 9 6.2 11" stroke="#a0a000" stroke-width="2.6" fill="none" transform="translate(0.8,0.8)"/><path d="M2 4.5 Q2 1 6 1 Q10 1 10 4.5 Q10 6.5 7.5 8 Q6.2 9 6.2 11" stroke="#f4f400" stroke-width="2.6" fill="none"/><rect x="4.8" y="12.5" width="3" height="3" fill="#f4f400"/><rect x="7.8" y="13.3" width="0.8" height="2.5" fill="#a0a000"/></svg>
<div class="t" style="left:867px;top:589px;letter-spacing:-0.8px">Info</div>
<svg style="left:898px;top:573px" width="20" height="16" viewBox="0 0 20 16"><path d="M2.5 2.5 H16.5 V14.5 H3.5 Q0.5 14.5 0.5 11 V5.5 H2.5Z" fill="#fff" stroke="#1a2a90" stroke-width="1.4"/><path d="M4 4.5 H15" stroke="#00a0c0" stroke-dasharray="1 1"/><rect x="4" y="6.5" width="4" height="5" fill="#2060c0"/><path d="M9 7H15 M9 9H15 M9 11H15" stroke="#1a2a90"/><path d="M17 4 L19.5 5 L17 13" fill="#80d0f0" stroke="#1a2a90"/></svg>
<div class="t" style="left:899px;top:589px;letter-spacing:-0.8px">Xtra</div>
<svg style="left:928px;top:586px" width="7" height="4"><path d="M0 0H7L3.5 4Z" fill="#000"/></svg>
<div class="a" style="left:940px;top:571px;width:2px;height:31px;border-left:1px solid #a8a7aa;border-right:1px solid #fff"></div>
<svg style="left:953px;top:573px" width="14" height="14" viewBox="0 0 14 14"><path d="M1 1 L13 13 M13 1 L1 13" stroke="#a6a5a9" stroke-width="1.8"/></svg>
<div class="t" style="left:953px;top:589px;letter-spacing:-0.6px;color:#aeadb1">Del</div>
<!-- TASKBAR -->
<div class="a" style="left:0;top:708px;width:1024px;height:60px;background:linear-gradient(to bottom,#34507e 0px,#34507e 1px,#86c0ec 1px,#6ca8e4 8px,#5a96dc 15px,#3c7cd2 16px,#3a7ad0 46px,#3370c8 52px,#2c5cb8 60px)"></div>
<div class="a" style="left:884px;top:709px;width:140px;height:59px;border-left:1px solid #9cc0ec;background:linear-gradient(to bottom,#e4eefa 0,#cfe0f6 10px,#c6daf4 40px,#b0cbee 47px,#a8c4ec 59px)"></div>
<!-- start -->
<div class="a" style="left:-8px;top:709px;width:106px;height:30px;border-radius:0 13px 13px 0;background:linear-gradient(to bottom,#a8dca8 0,#6cbc6c 2px,#52ae52 5px,#48a848 13px,#2c9c2c 15px,#14a014 18px,#12b812 24px,#10b010 28px,#1a801a 30px);box-shadow:inset -1px 0 0 #60a060"></div>
<svg style="left:11px;top:714px" width="19" height="18" viewBox="0 0 19 18">
<path d="M1 3 Q4 1 8.5 2.5 L7.5 8 Q4 7 0.5 8.5Z" fill="#f25022"/>
<path d="M10 2.8 Q14 4 18 2.5 L17 8 Q13 9.5 9 8.5Z" fill="#7fba00"/>
<path d="M0.5 10 Q4 8.5 7.5 9.5 L6.5 15 Q3 14 0 16Z" fill="#00a4ef"/>
<path d="M9 10 Q13 11 17 9.5 L16 15 Q12 16.5 8 15.5Z" fill="#ffb900"/>
</svg>
<div class="t" style="left:35px;top:713px;font-size:18px;line-height:18px;font-weight:bold;font-style:italic;color:#fff;text-shadow:1px 1px 1px #1a5a1a;letter-spacing:-0.3px">start</div>
<!-- quick launch -->
<svg style="left:110px;top:717px" width="16" height="13" viewBox="0 0 16 13" shape-rendering="crispEdges"><rect width="16" height="13" fill="#000"/>
<path d="M1.5 3 V2 H3.5 V6 H1.5 V11 H3.5 M5.5 2 V11 M7.5 2 V7 H10 M9.5 2 V11 M11.5 3 V2 H13.5 V6 H11.5 V11 H14" stroke="#fff" stroke-width="1.2" fill="none"/></svg>
<svg style="left:133px;top:715px" width="16" height="16" viewBox="0 0 16 16"><path d="M12.5 10.5 A5 5 0 1 1 13 7.5 H3.5" fill="none" stroke="#1a78e0" stroke-width="2.6"/><path d="M1.5 15 Q-0.5 11 5 5.5 Q11 0 14.5 1 Q16 3 13 7" stroke="#e8b020" stroke-width="1.4" fill="none"/></svg>
<svg style="left:156px;top:715px" width="15" height="15" viewBox="0 0 15 15"><circle cx="7.5" cy="7.5" r="6.8" fill="#1a8080"/><circle cx="7.5" cy="7.5" r="5.3" fill="#2a9090" stroke="#c0e0e0" stroke-width="0.9"/><path d="M5 6 H6.5 M8.5 6 H10 M5 10 Q7.5 8 10 10" stroke="#0a5050" stroke-width="1.1" fill="none"/></svg>
<svg style="left:183px;top:714px" width="12" height="8" viewBox="0 0 12 8"><path d="M1 1 L4 4 L1 7 M6 1 L9 4 L6 7" stroke="#fff" stroke-width="1.6" fill="none"/></svg>
<svg style="left:108px;top:745px" width="18" height="15" viewBox="0 0 18 15"><rect x="1" y="3" width="16" height="9" fill="#e0a020"/><path d="M1 5 H17 M1 9 H17" stroke="#000" stroke-width="1.3"/><path d="M3 1 L5 4 M9 1 V4 M14 1 L12 4" stroke="#fff" stroke-width="1.3"/></svg>
<svg style="left:134px;top:745px" width="14" height="16" viewBox="0 0 14 16"><path d="M0.5 0.5 H9 L13.5 5 V15.5 H0.5Z" fill="#fff" stroke="#888"/><circle cx="7" cy="9" r="3.5" fill="#f0a000"/><circle cx="7" cy="9" r="1.8" fill="#000"/></svg>
<svg style="left:155px;top:745px" width="17" height="17" viewBox="0 0 17 17"><text x="8.5" y="7.5" font-size="8" font-weight="bold" text-anchor="middle" fill="#d8a020" stroke="#604010" stroke-width="0.4" font-family="Liberation Sans">CIV</text><path d="M3 8 H14 L12 11 V16 H5 V11Z" fill="#d8c8c0" stroke="#705040" stroke-width="0.6"/></svg>
<!-- task buttons -->
<div class="a tbb" style="left:201px;top:712px"></div>
<div class="a tbb" style="left:351px;top:712px"></div>
<div class="a tbb" style="left:501px;top:712px"></div>
<div class="a tbb" style="left:651px;top:712px"></div>
<div class="a tbb" style="left:201px;top:742px"></div>
<div class="a tbb" style="left:351px;top:742px"></div>
<div class="a tbp" style="left:501px;top:742px"></div>
<svg style="left:210px;top:715px" width="17" height="15" viewBox="0 0 17 15"><ellipse cx="8.5" cy="6" rx="7.5" ry="5.3" fill="#f0f0f0" stroke="#555"/><path d="M4 10 L3 14 L7.5 11" fill="#f0f0f0" stroke="#555"/></svg>
<div class="t tbt" style="left:230px;top:718px">Google Talk</div>
<svg style="left:359px;top:716px" width="17" height="14"><use href="#fold"/></svg>
<div class="t tbt" style="left:380px;top:718px">Data</div>
<svg style="left:509px;top:716px" width="17" height="14"><use href="#fold"/></svg>
<div class="t tbt" style="left:530px;top:718px">Pics</div>
<svg style="left:660px;top:714px" width="17" height="17" viewBox="0 0 17 17"><circle cx="8.5" cy="8.5" r="7.5" fill="#2a4ab0"/><path d="M8.5 1 A7.5 7.5 0 1 1 1.5 11 Q4 14 8 13 Q12 11 11 7 Q9 4 5 5 Q6 2 8.5 1Z" fill="#e86a10"/></svg>
<div class="t tbt" style="left:680px;top:718px">Command and Con...</div>
<svg style="left:210px;top:745px" width="17" height="17" viewBox="0 0 17 17"><rect x="2" y="0.5" width="13" height="5" fill="#d8a040" stroke="#704010" stroke-width="0.6"/><text x="8.5" y="5" font-size="5.5" font-weight="bold" text-anchor="middle" fill="#502000" font-family="Liberation Sans">CIV</text><path d="M3 7 H14 L12 10 V15.5 H5 V10Z" fill="#e0d8d0" stroke="#706050" stroke-width="0.7"/></svg>
<div class="t tbt" style="left:230px;top:748px">Civilization IV</div>
<svg style="left:360px;top:745px" width="15" height="17" viewBox="0 0 15 17"><path d="M1 1 L5 7 V16 H9 V7 L13 1 L10 0.5 L7 4 L4 0.5Z" fill="#e01010" stroke="#000" stroke-width="1"/></svg>
<div class="t tbt" style="left:380px;top:748px">Untitled - gmax - [R...</div>
<svg style="left:510px;top:745px" width="16" height="16"><use href="#tools"/></svg>
<div class="t tbt" style="left:530px;top:748px">Untitled - Command...</div>
<svg style="left:859px;top:715px" width="10" height="7" viewBox="0 0 10 7"><path d="M1 0.5 L4 3.5 L1 6.5 M5.5 0.5 L8.5 3.5 L5.5 6.5" stroke="#fff" stroke-width="1.6" fill="none"/></svg>
<div class="t" style="left:813px;top:733px;color:#fff;letter-spacing:-0.25px">Desktop</div>
<!-- tray -->
<svg style="left:895px;top:712px" width="17" height="16" viewBox="0 0 17 16"><rect x="1" y="2" width="9" height="7" fill="#2a3a80" stroke="#556" stroke-width="0.6"/><path d="M1 11 H10 L11 14 H0Z" fill="#c8d0f0" stroke="#446" stroke-width="0.6"/><path d="M12 2 Q14 4 12 6 M14 0.5 Q17 4 14 7.5" stroke="#222" fill="none" stroke-width="0.9"/></svg>
<svg style="left:913px;top:713px" width="16" height="13" viewBox="0 0 16 13"><rect x="0" y="0" width="16" height="13" fill="#e80000"/><text x="8" y="10" font-size="8.5" font-weight="bold" font-style="italic" text-anchor="middle" fill="#fff" font-family="Liberation Sans">ATI</text></svg>
<svg style="left:931px;top:711px" width="15" height="17" viewBox="0 0 15 17"><path d="M2 12 L10 6 L14 11 L6 16Z" fill="#909498" stroke="#444" stroke-width="0.8"/><path d="M6 12 L10 9 L11.5 11 L7.5 14Z" fill="#6a70a0"/><path d="M1 1 L6 0.5 L8 3 L5 8 L3 5 L1 5Z" fill="#40b030"/></svg>
<svg style="left:895px;top:731px" width="17" height="16" viewBox="0 0 17 16"><ellipse cx="8.5" cy="7" rx="7.5" ry="6" fill="#f4f4f4" stroke="#888"/><path d="M4 10 V4 L8.5 8 L13 4 V10" stroke="#d02020" stroke-width="1.8" fill="none"/><path d="M6 12 L5 15.5 L9 13" fill="#f4f4f4" stroke="#888" stroke-width="0.8"/></svg>
<svg style="left:913px;top:731px" width="16" height="14" viewBox="0 0 16 14"><path d="M0 13 L12 1 L10.5 6.5 L9 13Z" fill="#ff1010"/><path d="M9.5 6 L15.5 13" stroke="#10e010" stroke-width="1.6"/></svg>
<svg style="left:932px;top:731px" width="15" height="16" viewBox="0 0 15 16"><path d="M1 5 H4 L9 1 V15 L4 11 H1Z" fill="#e87020" stroke="#222" stroke-width="0.8"/><path d="M11 4 Q13 8 11 12 M13 2 Q16 8 13 14" stroke="#222" fill="none" stroke-width="0.9"/></svg>
<svg style="left:895px;top:748px" width="17" height="17" viewBox="0 0 17 17"><rect x="0.5" y="0.5" width="16" height="16" fill="#10f010" stroke="#000"/><path d="M3 4 A10 10 0 0 1 13 13 M3 7.5 A6.5 6.5 0 0 1 9.5 13" stroke="#809020" fill="none" stroke-width="1.2"/><path d="M3.5 10 L6 12 L5 13 Z" fill="#000" stroke="#000"/></svg>
<div class="t" style="left:960px;top:714px;color:#10204a;letter-spacing:-0.3px">12:56 PM</div>
<div class="t" style="left:954px;top:733px;color:#10204a">Wednesday</div>
<div class="t" style="left:958px;top:751px;color:#10204a">12/5/2007</div>
<!-- EDIT OBJECT DIALOG -->
<div class="a" style="left:291px;top:112px;width:442px;height:484px;background:#ebe9ed;border:3px solid #7cb2ec;border-top:0;box-shadow:inset 1px 0 0 #a8d0f6,0 0 0 0 #000"></div>
<div class="a" style="left:291px;top:112px;width:1px;height:484px;background:#5a90e0"></div>
<div class="a" style="left:732px;top:112px;width:1px;height:484px;background:#5a90e0"></div>
<div class="a" style="left:291px;top:595px;width:442px;height:1px;background:#5a90e0"></div>
<div class="a" style="left:291px;top:112px;width:442px;height:21px;border-top:1px solid #3a6ad0;background:linear-gradient(to bottom,#9ac8f4 0,#9ac8f4 1px,#4678c8 1px,#4c80cc 5px,#5088d0 10px,#62a0de 11px,#74b0e6 14px,#86bff0 19px,#5a90e0 20px)"></div>
<div class="t" style="left:294px;top:119px;font-size:11px;line-height:11px;font-weight:bold;color:#fff;letter-spacing:0.35px">Edit object</div>
<div class="a" style="left:715px;top:117px;width:13px;height:13px;border:1px solid #5070c0;border-radius:2px;background:linear-gradient(to bottom,#a0c0f0,#6a98e0 50%,#80b0ec)"></div>
<svg style="left:715px;top:117px" width="13" height="13"><path d="M3.5 3.5 L9.5 9.5 M9.5 3.5 L3.5 9.5" stroke="#fff" stroke-width="1.8"/></svg>
<!-- tabs -->
<div class="a" style="left:303px;top:141px;width:48px;height:19px;border:1px solid;border-bottom:0;border-right:0;border-color:#fff;border-radius:2px 0 0 0"></div>
<div class="a" style="left:401px;top:141px;width:81px;height:19px;border:1px solid;border-bottom:0;border-color:#fff #6f6f6f #6f6f6f #fff;border-radius:2px 2px 0 0;box-shadow:inset -1px 0 0 #a5a5a5"></div>
<div class="a" style="left:300px;top:159px;width:424px;height:399px;border:1px solid;border-color:#fff #6f6f6f #6f6f6f #fff;box-shadow:inset -1px -1px 0 #a5a5a5"></div>
<div class="a" style="left:350px;top:139px;width:52px;height:22px;background:#ebe9ed;border:1px solid;border-bottom:0;border-color:#fff #6f6f6f #6f6f6f #fff;border-radius:2px 2px 0 0;box-shadow:inset -1px 0 0 #a5a5a5"></div>
<div class="t" style="left:309px;top:146px;letter-spacing:-0.3px">General</div>
<div class="t" style="left:357px;top:144px;letter-spacing:-0.3px">Settings</div>
<div class="t" style="left:407px;top:146px;letter-spacing:-0.15px">Dependencies</div>
<div class="t" style="left:314px;top:178px;letter-spacing:-0.2px">m_ModelName</div>
<div class="a" style="left:314px;top:192px;width:368px;height:21px;border:1px solid;border-color:#a0a0a0 #fff #fff #a0a0a0;box-shadow:inset 1px 1px 0 #6b6b6b;background:#fff"></div>
<div class="a raised" style="left:659px;top:194px;width:22px;height:18px"></div>
<svg style="left:665px;top:197px" width="14" height="12"><use href="#tfold"/></svg>
<!-- scrollbar -->
<div class="a" style="left:693px;top:166px;width:17px;height:383px;background:repeating-conic-gradient(#f6f5f7 0 25%,#e0dfe3 0 50%) 0 0/2px 2px"></div>
<div class="a raised" style="left:693px;top:166px;width:17px;height:16px"></div>
<svg style="left:693px;top:166px" width="17" height="16"><path d="M5 10 H12 L8.5 6.5Z" fill="#000"/></svg>
<div class="a raised" style="left:693px;top:183px;width:17px;height:17px"></div>
<div class="a raised" style="left:693px;top:532px;width:17px;height:17px"></div>
<svg style="left:693px;top:532px" width="17" height="17"><path d="M5 7 H12 L8.5 10.5Z" fill="#000"/></svg>
<!-- buttons -->
<div class="a raised" style="left:444px;top:564px;width:75px;height:23px"></div>
<div class="t" style="left:473px;top:570px">OK</div>
<div class="a raised" style="left:525px;top:564px;width:75px;height:23px"></div>
<div class="t" style="left:545px;top:570px;letter-spacing:-0.2px">Cancel</div>
<div class="a raised" style="left:612px;top:564px;width:112px;height:23px"></div>
<div class="t" style="left:625px;top:570px;letter-spacing:-0.25px">OK &amp; Propagate...</div>
<!-- OPEN DIALOG -->
<div class="a" style="left:298px;top:218px;width:428px;height:273px;border-radius:7px 7px 0 0;background:#2a5cc4"></div>
<div class="a" style="left:299px;top:219px;width:426px;height:271px;border-radius:6px 6px 0 0;background:#5a8ee6"></div>
<div class="a" style="left:301px;top:247px;width:422px;height:241px;background:#2458c4"></div>
<div class="a" style="left:299px;top:219px;width:426px;height:29px;border-radius:6px 6px 0 0;background:linear-gradient(to bottom,#82bef0 0,#78b4ee 3px,#5c9ae2 10px,#4a88dc 14px,#3a78d4 15px,#3470d0 20px,#2c62c4 26px,#2654bc 28px,#1f4cb4 29px)"></div>
<div class="a" style="left:302px;top:248px;width:420px;height:239px;background:#ebe9ed"></div>
<div class="t" style="left:306px;top:229px;font-size:13px;line-height:13px;color:#fff;text-shadow:1px 1px 0 #1a3a90">Open</div>
<div class="a" style="left:677px;top:225px;width:19px;height:19px;border:1px solid #bcd0f4;border-radius:3px;background:linear-gradient(to bottom,#78a8ec 0,#4a80e0 45%,#3a70d6 60%,#4a88e4 100%)"></div>
<div class="t" style="left:681.5px;top:227px;font-size:17px;line-height:17px;color:#fff;-webkit-text-stroke:0.8px #fff">?</div>
<div class="a" style="left:700px;top:225px;width:19px;height:19px;border:1px solid #f0c8b8;border-radius:3px;background:linear-gradient(to bottom,#e8a088 0,#d86a48 40%,#d04a20 60%,#e06a40 100%)"></div>
<svg style="left:700px;top:225px" width="19" height="19"><path d="M5 5 L14 14 M14 5 L5 14" stroke="#fff" stroke-width="2"/></svg>
<div class="t" style="left:313px;top:259px;color:#000;letter-spacing:-0.2px">Look in:</div>
<div class="a" style="left:356px;top:253px;width:221px;height:21px;border:1px solid;border-color:#a0a0a0 #fff #fff #a0a0a0;box-shadow:inset 1px 1px 0 #6b6b6b;background:#fff"></div>
<svg style="left:362px;top:257px" width="16" height="13"><use href="#fold"/></svg>
<div class="t" style="left:381px;top:259px;letter-spacing:-0.6px">Gmax</div>
<div class="a raised" style="left:559px;top:255px;width:17px;height:18px"></div>
<svg style="left:559px;top:255px" width="17" height="18"><path d="M4.5 7 H12 L8.25 11Z" fill="#000"/></svg>
<svg style="left:586px;top:259px" width="13" height="10" viewBox="0 0 13 10"><path d="M0.5 5 L5 0.5 V3 H12.5 V7 H5 V9.5Z" fill="#00e8f0" stroke="#000" stroke-width="0.9"/></svg>
<svg style="left:607px;top:257px" width="16" height="14" viewBox="0 0 16 14"><path d="M0.5 1.5 H5.5 L6.5 2.5 H14.5 V12.5 H0.5Z" fill="url(#dith)" stroke="#000"/><path d="M1 3.5 H14" stroke="#000"/><path d="M7 4.5 L3.5 8 H6 V11 H12.5 V9.5 H8 V8 H10.5Z" fill="#000"/></svg>
<svg style="left:630px;top:256px" width="17" height="15" viewBox="0 0 17 15"><path d="M0.5 5.5 H4.5 L5.5 6.5 H11.5 V14.5 H0.5Z" fill="url(#dith)" stroke="#000"/><path d="M12.5 0 V7 M9 3.5 H16 M10 1 L15 6 M15 1 L10 6" stroke="#000" stroke-width="0.9"/></svg>
<svg style="left:653px;top:257px" width="24" height="14" viewBox="0 0 24 14"><rect x="0.5" y="0.5" width="15" height="13" fill="#fff" stroke="#000"/><rect x="1" y="1" width="14" height="2" fill="#1a2a90"/><path d="M3 5.5H4 M6 5.5H8 M10 5.5H11 M12.5 5.5H14 M3 8H4 M6 8H8 M10 8H11 M12.5 8H14 M3 10.5H4 M6 10.5H8 M10 10.5H11 M12.5 10.5H14" stroke="#1a2a90" stroke-width="1.2"/><path d="M18 6 H23 L20.5 9Z" fill="#000"/></svg>
<div class="a" style="left:308px;top:281px;width:408px;height:138px;background:#fff;border:1px solid #a5a5a5;box-shadow:inset 1px 1px 0 #e4e4e4"></div>
<div class="a" style="left:326px;top:368px;width:57px;height:17px;background:#3162b4"></div>

<svg style="left:310px;top:285px" width="16" height="13"><use href="#fold"/></svg>
<div class="t" style="left:328px;top:287px;color:#000;letter-spacing:-0.2px">autoback</div>
<svg style="left:310px;top:302px" width="16" height="13"><use href="#fold"/></svg>
<div class="t" style="left:328px;top:304px;color:#000;letter-spacing:-0.2px">downloads</div>
<svg style="left:310px;top:319px" width="16" height="13"><use href="#fold"/></svg>
<div class="t" style="left:328px;top:321px;color:#000;letter-spacing:-0.2px">drivers</div>
<svg style="left:310px;top:336px" width="16" height="13"><use href="#fold"/></svg>
<div class="t" style="left:328px;top:338px;color:#000;letter-spacing:-0.2px">express</div>
<svg style="left:310px;top:353px" width="16" height="13"><use href="#fold"/></svg>
<div class="t" style="left:328px;top:355px;color:#000;letter-spacing:-0.2px">fonts</div>
<svg style="left:310px;top:370px" width="16" height="13"><use href="#gfold"/></svg>
<div class="t" style="left:328px;top:372px;color:#fff;letter-spacing:-0.45px">gamepacks</div>
<svg style="left:406px;top:285px" width="16" height="13"><use href="#fold"/></svg>
<div class="t" style="left:424px;top:287px;color:#000;letter-spacing:-0.2px">Help</div>
<svg style="left:406px;top:302px" width="16" height="13"><use href="#fold"/></svg>
<div class="t" style="left:424px;top:304px;color:#000;letter-spacing:-0.2px">html</div>
<svg style="left:406px;top:319px" width="16" height="13"><use href="#fold"/></svg>
<div class="t" style="left:424px;top:321px;color:#000;letter-spacing:-0.2px">images</div>
<svg style="left:406px;top:336px" width="16" height="13"><use href="#fold"/></svg>
<div class="t" style="left:424px;top:338px;color:#000;letter-spacing:-0.2px">Maps</div>
<svg style="left:406px;top:353px" width="16" height="13"><use href="#fold"/></svg>
<div class="t" style="left:424px;top:355px;color:#000;letter-spacing:-0.2px">matlibs</div>
<svg style="left:406px;top:370px" width="16" height="13"><use href="#fold"/></svg>
<div class="t" style="left:424px;top:372px;color:#000;letter-spacing:-0.2px">meshes</div>
<svg style="left:502px;top:285px" width="16" height="13"><use href="#fold"/></svg>
<div class="t" style="left:520px;top:287px;color:#000;letter-spacing:-0.2px">PlugCFG</div>
<svg style="left:502px;top:302px" width="16" height="13"><use href="#fold"/></svg>
<div class="t" style="left:520px;top:304px;color:#000;letter-spacing:-0.2px">plugins</div>
<svg style="left:502px;top:319px" width="16" height="13"><use href="#fold"/></svg>
<div class="t" style="left:520px;top:321px;color:#000;letter-spacing:-0.2px">Scenes</div>
<svg style="left:502px;top:336px" width="16" height="13"><use href="#fold"/></svg>
<div class="t" style="left:520px;top:338px;color:#000;letter-spacing:-0.2px">scripts</div>
<svg style="left:502px;top:353px" width="16" height="13"><use href="#fold"/></svg>
<div class="t" style="left:520px;top:355px;color:#000;letter-spacing:-0.2px">sounds</div>
<svg style="left:502px;top:370px" width="16" height="13"><use href="#fold"/></svg>
<div class="t" style="left:520px;top:372px;color:#000;letter-spacing:-0.2px">stdplugs</div>
<svg style="left:598px;top:285px" width="16" height="13"><use href="#fold"/></svg>
<div class="t" style="left:616px;top:287px;color:#000;letter-spacing:-0.2px">ui</div>
<svg style="left:598px;top:302px" width="16" height="13"><use href="#fold"/></svg>
<div class="t" style="left:616px;top:304px;color:#000;letter-spacing:-0.2px">web</div>

<div class="t" style="left:311px;top:432px;letter-spacing:-0.4px">File name:</div>
<div class="a" style="left:383px;top:428px;width:232px;height:19px;border:1px solid;border-color:#a0a0a0 #fff #fff #a0a0a0;box-shadow:inset 1px 1px 0 #6b6b6b;background:#fff"></div>
<div class="t" style="left:311px;top:463px;letter-spacing:-0.35px">Files of type:</div>
<div class="a" style="left:383px;top:458px;width:232px;height:20px;border:1px solid;border-color:#a0a0a0 #fff #fff #a0a0a0;box-shadow:inset 1px 1px 0 #6b6b6b;background:#fff"></div>
<div class="t" style="left:387px;top:463px;letter-spacing:-0.2px">Westwood 3D Files (*.w3d)</div>
<div class="a raised" style="left:597px;top:460px;width:17px;height:17px"></div>
<svg style="left:597px;top:460px" width="17" height="17"><path d="M4.5 7 H12 L8.25 11Z" fill="#000"/></svg>
<div class="a" style="left:635px;top:427px;width:75px;height:23px;border:1px solid #000"></div>
<div class="a raised" style="left:636px;top:428px;width:73px;height:21px"></div>
<div class="t" style="left:659px;top:433px">Open</div>
<div class="a raised" style="left:635px;top:456px;width:75px;height:23px"></div>
<div class="t" style="left:655px;top:462px;letter-spacing:-0.2px">Cancel</div>
<svg style="left:710px;top:475px" width="12" height="12"><path d="M11 1 L1 11 M11 5 L5 11 M11 9 L9 11" stroke="#a8a7aa"/><path d="M12 2 L2 12 M12 6 L6 12 M12 10 L10 12" stroke="#fff"/></svg>
<!-- cursor -->
<svg style="left:355px;top:378px" width="13" height="21" viewBox="0 0 13 21"><path d="M0.5 0.5 V16.5 L4.3 12.8 L7 19.5 L9.5 18.5 L6.8 12 H11.8 Z" fill="#fff" stroke="#000" stroke-width="1" stroke-linejoin="miter"/></svg>
</body></html>
